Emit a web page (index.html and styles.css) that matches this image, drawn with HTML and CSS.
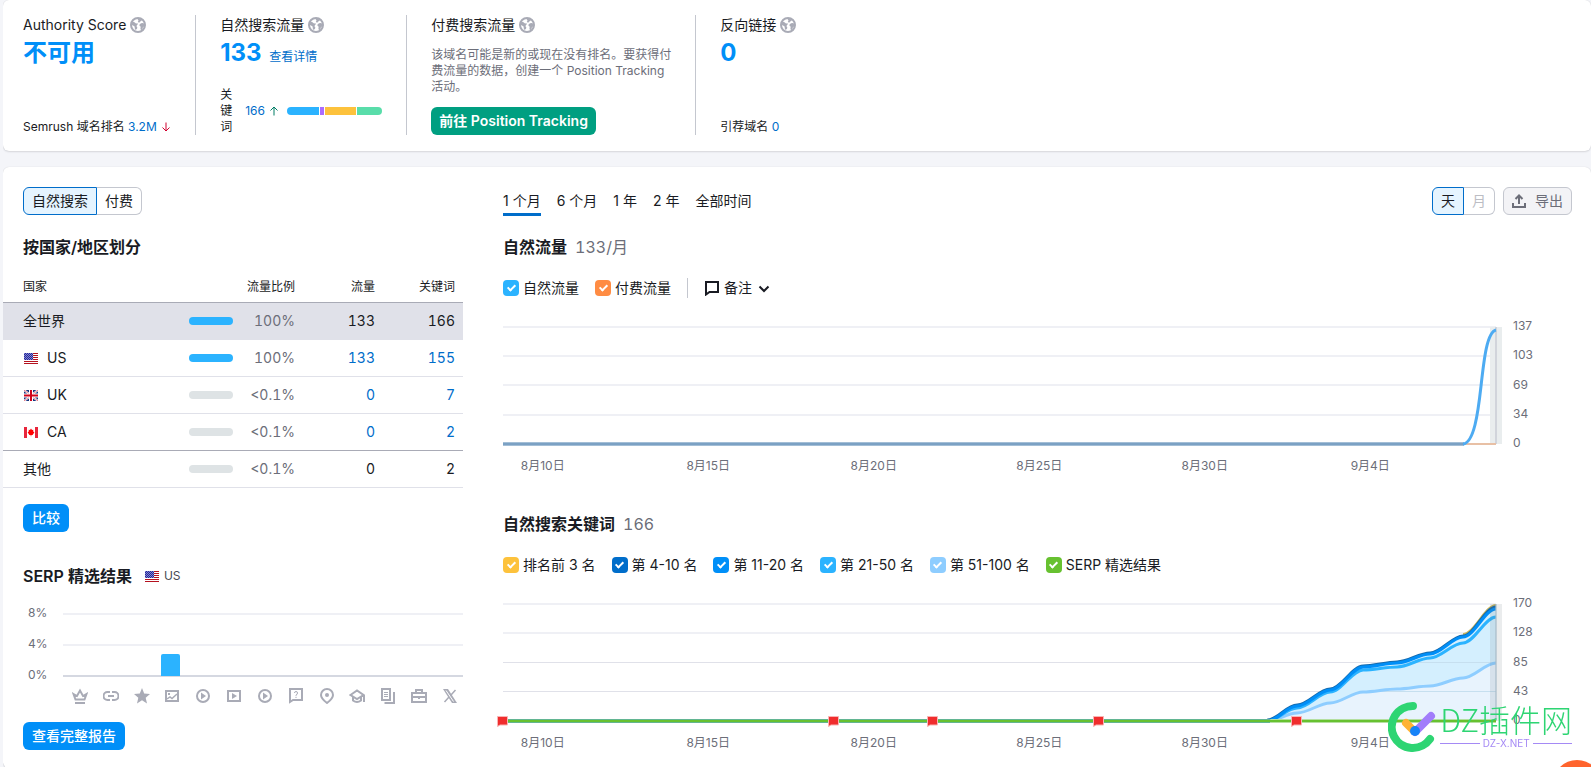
FILE: index.html
```html
<!DOCTYPE html>
<html lang="zh-CN">
<head>
<meta charset="utf-8">
<title>域名概览</title>
<link rel="stylesheet" href="styles.css">
</head>
<body>
<svg class="defs" aria-hidden="true">
  <symbol id="globe" viewBox="0 0 16 16">
    <circle cx="8" cy="8" r="7" fill="#fff" stroke="#a9abb6" stroke-width="2"/>
    <path fill="#a9abb6" d="M1.500 5.500 3 4.800l1.500.4L6 6.500l1.300-.3L8 7 6.800 8.200 6.600 9.500l.8 1.200-.6 1.300L5.500 13 4.800 11.500 4.600 9.600 3 8.400 1.500 8zM7.500 2l1 1.500L7.800 5l1.400.8 1-1.400 1.600-.6L11 2.200 9 1.500zM9.500 7.500 11 6.300l2-.3 1.500 1v2.500L13 10l-.7 2.500-1.300.8-.6-1.800.3-1.700-1.200-1z"/>
  </symbol>
  <symbol id="us" viewBox="0 0 14 11">
    <path fill="#fff" d="M0 0h14v11H0z"/>
    <path fill="#b5121f" d="M6 0h8v1H6zM6 2h8v1H6zM6 4h8v1H6zM6 6h8v1H6zM0 8h14v1H0zM0 10h14v1H0z"/>
    <path fill="#23279a" d="M0 0h9v7H0z"/>
    <path stroke="#8486cf" stroke-dasharray="1 1" d="M0 .5h9M1 1.5h8M0 2.5h9M1 3.5h8M0 4.5h9M1 5.5h8M0 6.5h9"/>
  </symbol>
  <symbol id="uk" viewBox="0 0 14 11">
    <path fill="#16357f" d="M0 0h14v11H0z"/>
    <path stroke="#fff" stroke-width="2" d="m0 0 14 11M14 0 0 11"/>
    <path stroke="#d8384a" stroke-width=".7" d="m0 0 14 11M14 0 0 11"/>
    <path stroke="#fff" stroke-width="4" d="M7 0v11M0 5.5h14"/>
    <path stroke="#d0021b" stroke-width="2" d="M7 0v11M0 5.5h14"/>
  </symbol>
  <symbol id="ca" viewBox="0 0 14 11">
    <path fill="#fff" d="M0 0h14v11H0z"/>
    <path fill="#e8253b" d="M0 0h3v11H0zM11 0h3v11h-3z"/>
    <path fill="#f00" d="m7 1.500 1 1.500 1.300-.2-.1 1.600 1.200.8L8.600 8H7.300v1.300h-.6V8H5.400L3.600 5.200l1.200-.8-.1-1.600L6 3z"/>
  </symbol>
  <symbol id="flag" viewBox="0 0 11 11">
    <path fill="#f02d2d" stroke="#f9b4b4" d="M.5.5h10v8.500H3L.5 10.500z"/>
  </symbol>
</svg>

<section class="card summary">
  <div class="metric">
    <div>
      <h2 class="metric-title">Authority Score <svg class="i16"><use href="#globe"/></svg></h2>
      <p class="metric-value">不可用</p>
    </div>
    <p class="metric-foot">Semrush 域名排名 <a href="#">3.2M</a>
      <svg class="arrow" viewBox="0 0 8 10" fill="none" stroke="#d1002f"><path d="M4 .5v8.500M.5 5.500 4 9l3.500-3.500"/></svg></p>
  </div>
  <div class="metric">
    <div>
      <h2 class="metric-title">自然搜索流量 <svg class="i16"><use href="#globe"/></svg></h2>
      <p class="metric-value">133 <a class="detail" href="#">查看详情</a></p>
    </div>
    <div class="keywords">
      <span class="kw-label">关键词</span>
      <span class="kw-count"><a href="#">166</a>
        <svg class="arrow" viewBox="0 0 8 10" fill="none" stroke="#007c65"><path d="M4 9.500V1M.5 4.500 4 1l3.500 3.500"/></svg></span>
      <span class="kw-bar"><i class="seg-blue"></i><i class="seg-purple"></i><i class="seg-yellow"></i><i class="seg-green"></i></span>
    </div>
  </div>
  <div class="metric">
    <div>
      <h2 class="metric-title">付费搜索流量 <svg class="i16"><use href="#globe"/></svg></h2>
      <p class="metric-note">该域名可能是新的或现在没有排名。要获得付费流量的数据，创建一个 Position Tracking 活动。</p>
    </div>
    <button class="btn btn-green" type="button">前往 Position Tracking</button>
  </div>
  <div class="metric">
    <div>
      <h2 class="metric-title">反向链接 <svg class="i16"><use href="#globe"/></svg></h2>
      <p class="metric-value">0</p>
    </div>
    <p class="metric-foot">引荐域名 <a href="#">0</a></p>
  </div>
</section>

<main class="card report">
  <section class="left">
    <div class="pad">
      <div class="pills"><button type="button" class="pill active">自然搜索</button><button type="button" class="pill">付费</button></div>
      <h3 class="heading">按国家/地区划分</h3>
    </div>
    <table class="countries">
      <thead><tr><th>国家</th><th></th><th>流量比例</th><th>流量</th><th>关键词</th></tr></thead>
      <tbody>
        <tr class="selected"><td>全世界</td><td><i class="meter full"></i></td><td>100%</td><td>133</td><td>166</td></tr>
        <tr><td><svg class="flag"><use href="#us"/></svg>US</td><td><i class="meter full"></i></td><td>100%</td><td><a href="#">133</a></td><td><a href="#">155</a></td></tr>
        <tr><td><svg class="flag"><use href="#uk"/></svg>UK</td><td><i class="meter"></i></td><td>&lt;0.1%</td><td><a href="#">0</a></td><td><a href="#">7</a></td></tr>
        <tr class="last-country"><td><svg class="flag"><use href="#ca"/></svg>CA</td><td><i class="meter"></i></td><td>&lt;0.1%</td><td><a href="#">0</a></td><td><a href="#">2</a></td></tr>
        <tr><td>其他</td><td><i class="meter"></i></td><td>&lt;0.1%</td><td>0</td><td>2</td></tr>
      </tbody>
    </table>
    <div class="pad">
      <button class="btn btn-blue compare" type="button">比较</button>
      <h3 class="heading serp-title">SERP 精选结果 <span class="serp-country"><svg class="flag"><use href="#us"/></svg>US</span></h3>
    </div>
    <div class="serp-chart">
      <div class="serp-labels"><span>8%</span><span>4%</span><span>0%</span></div>
      <svg class="serp-plot" viewBox="0 0 400 65" preserveAspectRatio="none">
        <path fill="#eff0f5" d="M0 1h400v2H0zM0 32h400v2H0z"/>
        <path fill="#d5d8e1" d="M0 63h400v2H0z"/>
        <path fill="#2bb3ff" d="M98 44q0-2 2-2h15q2 0 2 2v20H98z"/>
      </svg>
    </div>
    <div class="serp-icons">
      <svg viewBox="0 0 16 16"><path d="M1.500 6 5 8l3-5.500L11 8l3.500-2-2 5.500h-9zM3 15h10"/></svg>
      <svg viewBox="0 0 16 16"><path d="M7 4H4.500a4 4 0 0 0 0 8H7M9 4h2.500a4 4 0 0 1 0 8H9M5 8h6"/></svg>
      <svg viewBox="0 0 16 16"><path class="solid" d="m8 0 2.200 5.500L16 6l-4.300 3.800L13 15.500 8 12.300l-5 3.200 1.300-5.700L0 6l5.800-.5z"/></svg>
      <svg viewBox="0 0 16 16"><path d="M2 3h12v10H2z"/><path d="m3 11 3-2 2 1.500L13 6" stroke-width="1.500"/><path class="solid" d="M4 5h2v2H4z"/></svg>
      <svg viewBox="0 0 16 16"><circle cx="8" cy="8" r="6"/><path class="solid" d="m6 4.500 5 3.500-5 3.500z"/></svg>
      <svg viewBox="0 0 16 16"><path d="M2 3h12v10H2z"/><path class="solid" d="m6 5 5 3-5 3z"/></svg>
      <svg viewBox="0 0 16 16"><circle cx="8" cy="8" r="6"/><path class="solid" d="m6 4.500 5 3.500-5 3.500z"/></svg>
      <svg viewBox="0 0 16 16"><path d="M2 1h12v11H5l-3 2z"/><path class="thin" d="M6.500 5q0-1.500 1.500-1.500T9.500 5 8 7v.800M8 8.800V10"/></svg>
      <svg viewBox="0 0 16 16"><path d="M8 15Q2 10.500 2 7a6 6 0 0 1 12 0q0 3.500-6 8z"/><circle class="solid" cx="8" cy="7" r="2"/></svg>
      <svg viewBox="0 0 16 16"><path d="m1.500 7 6.500-4.500L14.500 7 8 11zM4 9v3.500q4 3 8 0V9M15 7v7"/></svg>
      <svg viewBox="0 0 16 16"><path d="M2 1h8v11H2zM4.500 15H14V4"/><path class="thin" d="M4 4.500h4M4 6.500h4M4 8.500h4"/></svg>
      <svg viewBox="0 0 16 16"><path d="M1 5h14v9H1zM5 5V2h6v3M1 9h14M8 8v3"/></svg>
      <svg viewBox="0 0 16 16"><path d="M13.500 2 9 7M7 9l-4.500 5" stroke-width="1.500"/><path class="solid" d="M1 1h5l9 14h-5z"/><path class="slit" d="m4 2.500 7.500 11"/></svg>
    </div>
    <div class="pad"><button class="btn btn-blue full-report" type="button">查看完整报告</button></div>
  </section>

  <section class="right">
    <div class="toolbar">
      <nav class="tabs"><a class="tab current" href="#">1 个月</a><a class="tab" href="#">6 个月</a><a class="tab" href="#">1 年</a><a class="tab" href="#">2 年</a><a class="tab" href="#">全部时间</a></nav>
      <div class="pills"><button type="button" class="pill active">天</button><button type="button" class="pill" disabled>月</button></div>
      <button class="export" type="button"><svg class="i16" viewBox="0 0 16 16" fill="none" stroke="#6c6e79" stroke-width="2"><path d="M2 10v4h12v-4M8 11V3M4.500 6 8 2.500 11.500 6"/></svg>导出</button>
    </div>

    <h3 class="heading">自然流量 <span class="total">133/月</span></h3>
    <div class="legend">
      <label><input type="checkbox" class="c-sky" checked>自然流量</label>
      <label><input type="checkbox" class="c-orange" checked>付费流量</label>
      <button class="notes" type="button"><svg class="i16" viewBox="0 0 16 16" fill="none" stroke="#191b23" stroke-width="2"><path d="M2 2h12v10H5.500L2 14.500z"/></svg>备注<svg class="chevron" viewBox="0 0 12 8" fill="none" stroke="#191b23" stroke-width="2"><path d="m1.500 1.500 4.500 4.500 4.500-4.500"/></svg></button>
    </div>
    <div class="chart">
      <svg class="plot" viewBox="0 0 1001 121" preserveAspectRatio="none">
        <path fill="#eff0f5" d="M0 1h994v2H0zM0 30h994v2H0zM0 59h994v2H0zM0 89h994v2H0z"/>
        <path fill="#e9edee" d="M988 2h12v117h-12z"/>
        <path stroke="#d1d4db" stroke-width="2" d="M994 2v117"/>
        <path stroke="#e8c0a5" stroke-width="2" d="M961 119h33"/>
        <path stroke="#a3bed6" stroke-width="4" d="M0 119h962"/>
        <path stroke="#7ba1c4" stroke-width="2" d="M0 119h962"/>
        <path fill="none" stroke="#4dabf2" stroke-width="3" d="M961 119C972 118 976 88 979 61S985 7 994 5"/>
      </svg>
      <div class="y-axis"><span>137</span><span>103</span><span>69</span><span>34</span><span>0</span></div>
      <div class="x-axis"><span>8月10日</span><span>8月15日</span><span>8月20日</span><span>8月25日</span><span>8月30日</span><span>9月4日</span></div>
    </div>

    <h3 class="heading second">自然搜索关键词 <span class="total">166</span></h3>
    <div class="legend">
      <label><input type="checkbox" class="c-yellow" checked>排名前 3 名</label>
      <label><input type="checkbox" class="c-navy" checked>第 4-10 名</label>
      <label><input type="checkbox" class="c-blue" checked>第 11-20 名</label>
      <label><input type="checkbox" class="c-sky" checked>第 21-50 名</label>
      <label><input type="checkbox" class="c-pale" checked>第 51-100 名</label>
      <label><input type="checkbox" class="c-green" checked>SERP 精选结果</label>
    </div>
    <div class="chart">
      <svg class="plot" viewBox="0 0 1001 121" preserveAspectRatio="none">
        <path fill="#eff0f5" d="M0 1h994v2H0zM0 30h994v2H0z"/>
        <path fill="#e0e1e9" d="M0 60h994v1H0zM0 89h994v1H0z"/>
        <path fill="#d4effe" d="M765 119C776 119 784 103 795 103S817 87 828 87 850 64 861 64 884 61 895 61 917 51 928 51 950 34 961 34 983 5 994 5V119z"/>
        <path fill="#e8f3fd" d="M765 119C776 119 784 111 795 111S817 101 828 101 850 90 861 90 884 87 895 87 917 84 928 84 950 76 961 76 983 61 994 61V119z"/>
        <g fill="none">
          <path fill="#c6dfef" d="M895 60h99v1h-99zM861 89h133v1H861z"/>
          <path stroke="#8ecdff" stroke-width="3" d="M765 119C776 119 784 111 795 111S817 101 828 101 850 90 861 90 884 87 895 87 917 84 928 84 950 76 961 76 983 61 994 61"/>
          <path stroke="#2bb3ff" stroke-width="3" d="M765 119C776 119 784 106 795 106S817 90 828 90 850 68 861 68 884 65 895 65 917 56 928 56 950 41 961 41 983 15 994 15"/>
          <path stroke="#c9b458" stroke-width="2" d="M961 32C972 32 983 3 994 3"/>
          <path stroke="#146aae" stroke-width="3" d="M765 118C776 118 784 103 795 103S817 87 828 87 850 64 861 64 884 60 895 60 917 51 928 51 950 34 961 34 983 5 994 5"/>
          <path stroke="#008ff8" stroke-width="3" d="M765 119C776 119 784 104 795 104S817 88 828 88 850 65 861 65 884 61 895 61 917 52 928 52 950 35 961 35 983 7 994 7"/>
        </g>
        <path fill="#6c7a80" fill-opacity=".14" d="M988 2h12v117h-12z"/>
        <path stroke="#a7bac8" stroke-opacity=".6" stroke-width="2" d="M994 2v117"/>
        <path stroke="#62b592" stroke-width="4" d="M0 119h768"/>
        <path stroke="#b4dfa0" stroke-width="4" d="M768 119h226"/>
        <path stroke="#67c130" stroke-width="2" d="M0 119h994"/>
      </svg>
      <div class="pins">
        <svg style="left:0%"><use href="#flag"/></svg><svg style="left:33.300%"><use href="#flag"/></svg><svg style="left:43.300%"><use href="#flag"/></svg><svg style="left:60%"><use href="#flag"/></svg><svg style="left:80%"><use href="#flag"/></svg>
      </div>
      <div class="y-axis"><span>170</span><span>128</span><span>85</span><span>43</span><span>0</span></div>
      <div class="x-axis"><span>8月10日</span><span>8月15日</span><span>8月20日</span><span>8月25日</span><span>8月30日</span><span>9月4日</span></div>
    </div>
  </section>
</main>

<div class="watermark">
  <svg class="wm-logo" viewBox="0 0 48 52" fill="none" stroke-linecap="round">
    <path stroke="#2ed573" stroke-width="8" d="M25 5A21 21 0 1 0 42 38"/>
    <path stroke="#ffb336" stroke-width="8" d="m18 22 8 8"/>
    <path stroke="#a17dfb" stroke-width="8" d="M27 31 43 15"/>
    <circle cx="27" cy="30" r="5" fill="#1683f8"/>
  </svg>
  <div class="wm-text"><span class="wm-name">DZ插件网</span><span class="wm-domain">DZ-X.NET</span></div>
</div>
<button class="fab" type="button" aria-label="帮助"></button>
</body>
</html>
```
FILE: styles.css
```css
* { box-sizing: border-box; }
html { background: #f4f5f9; }
body {
  margin: 0 0 0 3px;
  color: #191b23;
  font: 14px/20px Inter, "Noto Sans CJK SC", sans-serif;
}
h2, h3, p { margin: 0; font-weight: 400; }
a { color: #006dca; text-decoration: none; }
button { font: inherit; cursor: pointer; }
svg { flex: none; }
.defs { position: absolute; width: 0; height: 0; }
.i16 { width: 16px; height: 16px; }
.card {
  background: #fff;
  border-radius: 6px;
  box-shadow: 0 0 1px rgba(25, 27, 35, .16), 0 1px 2px rgba(25, 27, 35, .12);
}

/* summary */
.summary { display: flex; padding: 15px 0 16px; min-height: 151px; margin-bottom: 16px; }
.metric {
  display: flex;
  flex-direction: column;
  justify-content: space-between;
  align-items: flex-start;
  min-height: 120px;
  padding: 0 24px;
  border-right: 1px solid #c4c7cf;
}
.metric:first-child { padding: 0 25px 0 20px; }
.metric:last-child { border-right: 0; }
.metric-title { display: flex; align-items: center; gap: 4px; font-size: 14px; line-height: 20px; }
.metric-value { margin-top: 2px; font-size: 24px; line-height: 32px; font-weight: 700; color: #008ff8; }
.detail { margin-left: 2px; font-size: 12px; font-weight: 400; }
.metric-foot { font-size: 12px; line-height: 16px; }
.arrow { width: 8px; height: 10px; margin-left: 2px; vertical-align: -1px; }
.keywords { display: flex; align-items: center; font-size: 12px; line-height: 16px; }
.kw-label { width: 12px; }
.kw-count { margin: 0 9px 0 13px; white-space: nowrap; }
.kw-bar { display: flex; gap: 1px; width: 95px; height: 8px; border-radius: 4px; overflow: hidden; }
.seg-blue { flex: 32; background: #2bb3ff; }
.seg-purple { flex: 4; background: #ab6cfe; }
.seg-yellow { flex: 31; background: #fdc23c; }
.seg-green { flex: 25; background: #59ddaa; }
.metric-note { width: 240px; margin-top: 12px; font-size: 12px; line-height: 16px; color: #6c6e79; }
.btn { height: 28px; padding: 0 9px; border: 0; border-radius: 6px; color: #fff; font-weight: 500; line-height: 20px; }
.btn-green { padding: 0 8px; background: #009f81; font-weight: 600; }
.btn-blue { display: block; background: #008ff8; }

/* report */
.report {
  display: grid;
  grid-template-columns: 460px 1fr;
  gap: 40px;
  padding: 20px 19px 17px 0;
}
.pad { padding-left: 20px; }
.pills { display: flex; height: 28px; }
.pill { padding: 0 8px; border: 1px solid #c4c7cf; background: #fff; color: #191b23; line-height: 20px; }
.pill:first-child { border-radius: 6px 0 0 6px; }
.pill:last-child { border-left: 0; border-radius: 0 6px 6px 0; }
.pill.active { border-color: #006dca; background: #e5f4ff; }
.pill:disabled { color: #bcbdc4; }
.heading { font-size: 16px; line-height: 24px; font-weight: 600; }
.left .heading { margin-top: 20px; }
.countries {
  width: 100%;
  margin-top: 10px;
  border-collapse: separate;
  border-spacing: 0;
  table-layout: fixed;
  font-variant-numeric: tabular-nums;
}
.countries th { height: 34px; padding: 2px 8px 0 0; border-bottom: 1px solid #a9abb6; font-size: 12px; font-weight: 400; text-align: right; }
.countries td { height: 37px; padding: 0 8px 0 0; border-bottom: 1px solid #e0e1e9; text-align: right; }
.countries th:first-child, .countries td:first-child { width: 186px; padding-left: 20px; text-align: left; }
.countries th:nth-child(2) { width: 44px; }
.countries td:nth-child(2) { padding: 0; }
.countries th:nth-child(3) { width: 70px; }
.countries th:nth-child(4) { width: 80px; }
.countries td:nth-child(3) { color: #6c6e79; }
.countries .selected td { background: #e0e1e9; }
.countries .last-country td { border-bottom-color: #a9abb6; }
.flag { width: 14px; height: 11px; margin: 0 9px 0 1px; vertical-align: -1px; }
.meter { display: block; height: 8px; border-radius: 4px; background: #dee3e5; }
.meter.full { background: #2bb3ff; }
.compare { margin-top: 16px; }
.left .serp-title { display: flex; align-items: center; margin-top: 32px; }
.serp-country { display: flex; align-items: center; margin-left: 12px; font-size: 12px; font-weight: 400; color: #484a54; }
.serp-country .flag { margin-right: 5px; }
.serp-chart { display: flex; margin-top: 17px; height: 78px; }
.serp-labels { display: flex; flex-direction: column; justify-content: space-between; width: 60px; padding-left: 25px; font-size: 12px; line-height: 16px; color: #6c6e79; }
.serp-plot { flex: 1; height: 65px; margin-top: 7px; }
.serp-icons { display: flex; justify-content: space-between; margin: 5px 5px 0 69px; }
.serp-icons svg { width: 16px; height: 16px; fill: none; stroke: #a9abb6; stroke-width: 2; }
.serp-icons .solid { fill: #a9abb6; stroke: none; }
.serp-icons .thin { stroke-width: 1; }
.serp-icons .slit { stroke: #fff; stroke-width: 1; }
.full-report { margin-top: 18px; }

.toolbar { display: flex; align-items: flex-start; height: 29px; margin-bottom: 19px; }
.tabs { display: flex; gap: 16px; margin-right: auto; }
.tab { padding: 4px 0 2px; border-bottom: 3px solid transparent; color: #191b23; }
.tab.current { border-color: #006dca; }
.export { display: flex; align-items: center; gap: 8px; height: 28px; margin-left: 8px; padding: 0 8px 0 7px; border: 1px solid #c4c7cf; border-radius: 6px; background: #f3f3f6; color: #6c6e79; line-height: 20px; }
.total { margin-left: 4px; font-weight: 400; color: #6c6e79; font-variant-numeric: tabular-nums; }
.legend { display: flex; align-items: center; gap: 16px; height: 20px; margin-top: 19px; }
.legend label { display: flex; align-items: center; gap: 4px; }
.legend input { appearance: none; display: grid; place-items: center; width: 16px; height: 16px; margin: 0; border-radius: 4px; }
.legend input::before { content: ""; box-sizing: border-box; width: 5px; height: 8px; margin-bottom: 2px; border: solid #fff; border-width: 0 2px 2px 0; transform: rotate(45deg); }
.c-sky { background: #2bb3ff; }
.c-orange { background: #ff8c43; }
.c-yellow { background: #fdc23c; }
.c-navy { background: #006dca; }
.c-blue { background: #008ff8; }
.c-pale { background: #8ecdff; }
.c-green { background: #67c130; }
.notes { display: flex; align-items: center; gap: 4px; height: 20px; padding: 0 0 0 16px; border: 0; border-left: 1px solid #c4c7cf; background: none; color: #191b23; }
.chevron { width: 12px; height: 8px; margin: 2px 0 0 2px; }
.chart { display: grid; grid-template-columns: 1fr 69px; position: relative; margin-top: 20px; font-size: 12px; line-height: 16px; color: #6c6e79; }
.plot { grid-area: 1 / 1; width: 100%; height: 121px; margin-top: 7px; }
.pins { grid-area: 1 / 1; position: relative; margin-right: 7px; }
.pins svg { position: absolute; top: 121px; width: 11px; height: 11px; margin-left: -6px; }
.y-axis { grid-area: 1 / 2; display: flex; flex-direction: column; justify-content: space-between; height: 133px; padding-left: 10px; }
.x-axis { grid-area: 2 / 1; display: grid; grid-template-columns: repeat(6, 1fr); margin: 0 50px 0 -43px; padding-top: 7px; text-align: center; }
.second { margin-top: 38px; }

/* overlays */
.watermark { position: fixed; right: 19px; bottom: 14px; display: flex; align-items: flex-start; gap: 4px; color: #2ed573; font-family: "Noto Sans CJK SC", sans-serif; }
.wm-logo { width: 48px; height: 52px; }
.wm-text { display: flex; flex-direction: column; }
.wm-name { font-size: 31px; line-height: 36px; font-weight: 300; }
.wm-domain { display: flex; align-items: center; gap: 3px; font: 10px/12px Inter, sans-serif; color: #a58af5; }
.wm-domain::before, .wm-domain::after { content: ""; flex: 1; height: 1px; background: #a58af5; }
.fab { position: fixed; right: -10px; bottom: -41px; width: 48px; height: 48px; padding: 0; border: 0; border-radius: 50%; background: #ff642d; }
```
